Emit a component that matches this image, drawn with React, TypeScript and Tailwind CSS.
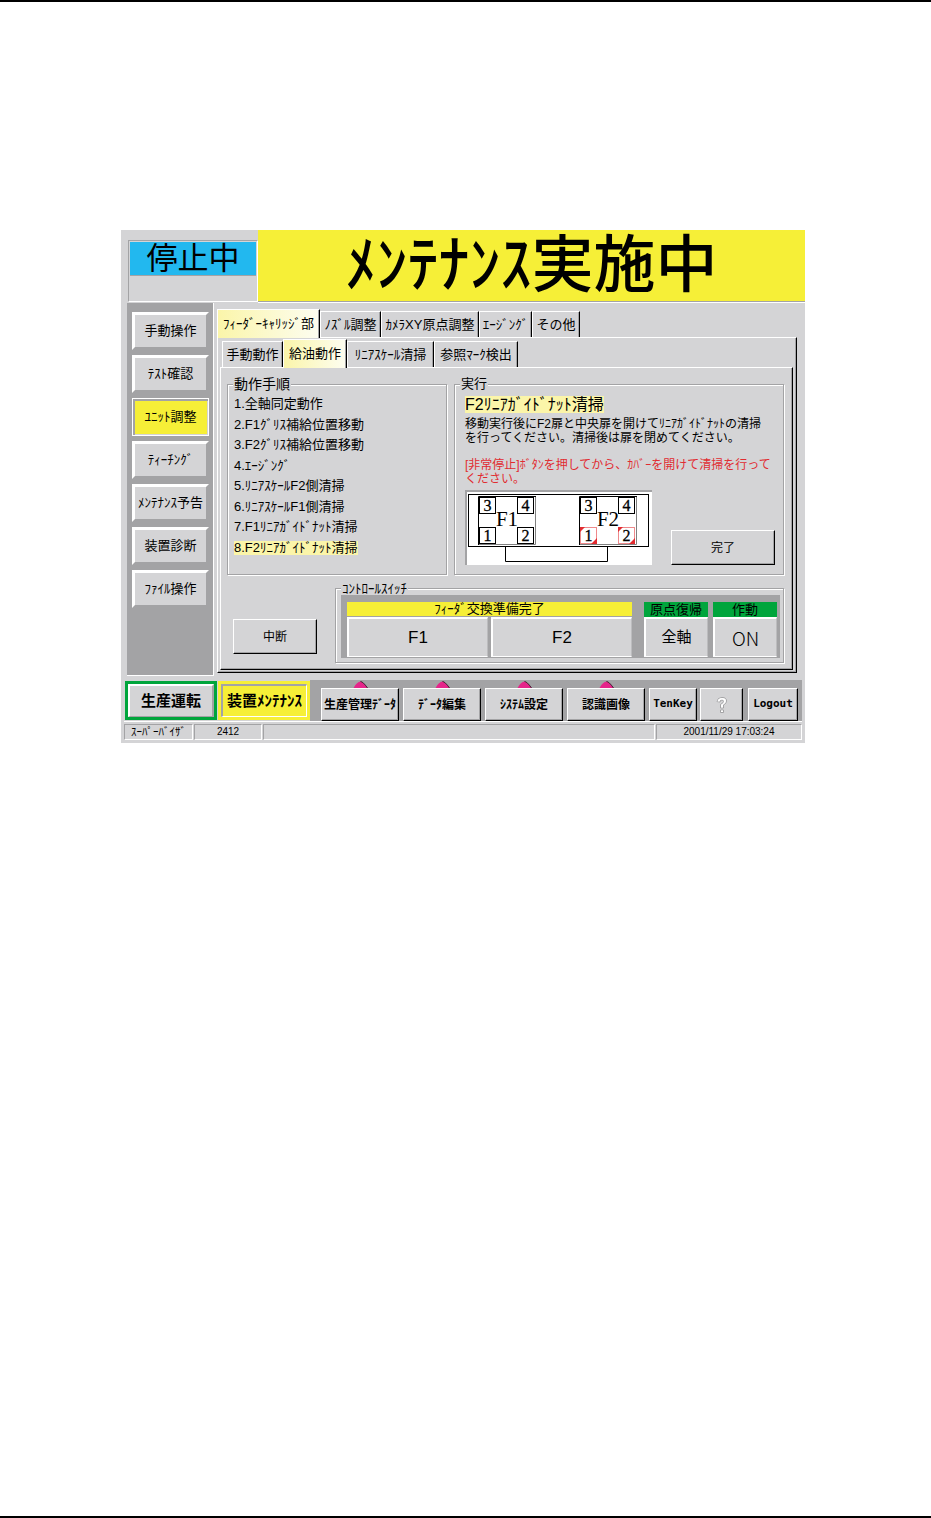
import type { ReactNode } from "react";

const sideItems = ["手動操作", "ﾃｽﾄ確認", "ﾕﾆｯﾄ調整", "ﾃｨｰﾁﾝｸﾞ", "ﾒﾝﾃﾅﾝｽ予告", "装置診断", "ﾌｧｲﾙ操作"];

const mainTabs = [
  { label: "ﾌｨｰﾀﾞｰｷｬﾘｯｼﾞ部", width: "w-[103px]" },
  { label: "ﾉｽﾞﾙ調整", width: "w-[61px]" },
  { label: "ｶﾒﾗXY原点調整", width: "w-[98px]" },
  { label: "ｴｰｼﾞﾝｸﾞ", width: "w-[53px]" },
  { label: "その他", width: "w-[48px]" },
];

const subTabs = [
  { label: "手動動作", width: "w-[61px]" },
  { label: "給油動作", width: "w-[64px]" },
  { label: "ﾘﾆｱｽｹｰﾙ清掃", width: "w-[87px]" },
  { label: "参照ﾏｰｸ検出", width: "w-[84px]" },
];

const steps = [
  "1.全軸同定動作",
  "2.F1ｸﾞﾘｽ補給位置移動",
  "3.F2ｸﾞﾘｽ補給位置移動",
  "4.ｴｰｼﾞﾝｸﾞ",
  "5.ﾘﾆｱｽｹｰﾙF2側清掃",
  "6.ﾘﾆｱｽｹｰﾙF1側清掃",
  "7.F1ﾘﾆｱｶﾞｲﾄﾞﾅｯﾄ清掃",
  "8.F2ﾘﾆｱｶﾞｲﾄﾞﾅｯﾄ清掃",
];

const menuItems = ["生産管理ﾃﾞｰﾀ", "ﾃﾞｰﾀ編集", "ｼｽﾃﾑ設定", "認識画像"];

const raised =
  "border border-t-white border-l-white border-r-black border-b-black bg-[#d4d4d6] shadow-[inset_-1px_-1px_0_#a3a3a5]";

const groupBox =
  "min-w-0 border border-[#a3a3a5] shadow-[1px_1px_0_#fff,inset_1px_1px_0_#fff]";

function Tab({ label, width, selected }: { label: string; width: string; selected: boolean }) {
  return (
    <button
      type="button"
      role="tab"
      aria-selected={selected}
      className={`${width} shrink-0 whitespace-nowrap border-t border-r border-l border-t-white border-l-white border-r-black text-[13px] leading-[14px] shadow-[inset_-1px_0_0_#a3a3a5] ${
        selected
          ? "relative -mb-px h-[29px] bg-linear-to-r from-[#fbf5a9] to-[#fdfdf0]"
          : "h-[26px] bg-[#d4d4d6]"
      }`}
    >
      {label}
    </button>
  );
}

function SwitchButton({ children, className }: { children: ReactNode; className: string }) {
  return (
    <button
      type="button"
      className={`h-10 border-t-2 border-r border-b border-l-2 border-t-white border-r-[#bcbcbe] border-b-white border-l-white bg-[#d4d4d6] ${className}`}
    >
      {children}
    </button>
  );
}

function Carriage({ x, name, alert }: { x: number; name: string; alert: boolean }) {
  const lower = alert ? "#ee8a8c" : "#000";
  const cells = [
    { n: "3", cx: 1, cy: 5, c: "#000" },
    { n: "4", cx: 39, cy: 5, c: "#000" },
    { n: "1", cx: 1, cy: 35, c: lower },
    { n: "2", cx: 39, cy: 35, c: lower },
  ];
  return (
    <g transform={`translate(${x} 0)`}>
      <path d="M57.5 4.5V52.5H0.5" fill="none" stroke="#808080" />
      <path d="M0.5 53V4.5H58" fill="none" stroke="#000" />
      {cells.map((c) => (
        <g key={c.n}>
          <rect x={c.cx + 0.5} y={c.cy + 0.5} width="16" height="16" fill="#fff" stroke={c.c} />
          {alert && c.cy > 30 && (
            <path
              d={`M${c.cx} ${c.cy}h5l-5 5zM${c.cx + 17} ${c.cy + 17}h-6l6 -6z`}
              fill="#e12b30"
            />
          )}
          <text x={c.cx + 8.5} y={c.cy + 14} textAnchor="middle" fontSize="16" stroke="#000" strokeWidth="0.3">
            {c.n}
          </text>
        </g>
      ))}
      <text x="29" y="34" textAnchor="middle" fontSize="21">
        {name}
      </text>
    </g>
  );
}

function CarriageDiagram() {
  return (
    <div className="w-[187px] border-t-2 border-l-2 border-[#a3a3a5] bg-white">
      <svg
        viewBox="0 0 185 73"
        className="block h-[73px] w-full font-['Liberation_Serif',serif]"
        role="img"
        aria-label="F1 F2"
      >
        <rect x="1.5" y="2.5" width="180" height="52" fill="#fff" stroke="#000" />
        <path d="M38.5 55V69.5H140.5V55" fill="none" stroke="#000" />
        <Carriage x={11} name="F1" alert={false} />
        <Carriage x={112} name="F2" alert />
      </svg>
    </div>
  );
}

function Header() {
  return (
    <header className="flex h-[73px]">
      <div className="w-[137px] shrink-0 pt-[10px] pl-[7px]">
        <div className="h-[62px] border border-[#a3a3a5] border-r-white border-b-white p-px">
          <div className="flex h-[34px] items-center justify-center border-b border-[#a3a3a5] bg-[#22b8ef] text-[31px] leading-8">
            停止中
          </div>
        </div>
      </div>
      <div className="flex min-w-0 flex-1 flex-col">
        <h1 className="flex h-[71px] items-center justify-center bg-[#f6ef37] text-[62px] leading-none font-medium whitespace-nowrap">
          ﾒﾝﾃﾅﾝｽ実施中
        </h1>
        <div className="h-[2px] border-t border-b border-t-[#a3a3a5] border-b-white" />
      </div>
    </header>
  );
}

function Sidebar() {
  return (
    <nav className="flex w-[87px] shrink-0 flex-col gap-[5px] border-r border-b border-white bg-[#a3a3a5] pt-[9px] pr-1 pl-[5px]">
      {sideItems.map((label) => (
        <button
          key={label}
          type="button"
          className={`h-[38px] text-[13px] leading-4 whitespace-nowrap ${
            label === "ﾕﾆｯﾄ調整"
              ? "border border-white bg-[#f6ef37] shadow-[inset_2px_2px_0_#a3a3a5,inset_-1px_-1px_0_#d4d4d6]"
              : "border-[3px] border-t-white border-r-[#a3a3a5] border-b-[#a3a3a5] border-l-white bg-[#d4d4d6]"
          }`}
        >
          {label}
        </button>
      ))}
    </nav>
  );
}

function ProcedureBox() {
  return (
    <fieldset className={`${groupBox} flex w-[220px] shrink-0 flex-col pr-1 pl-[5px]`}>
      <legend className="bg-[#d4d4d6] px-px text-sm leading-[14px]">動作手順</legend>
      <ol className="flex h-[164px] flex-col justify-between pt-[6px] pl-px text-[13px] leading-[14px]">
        {steps.map((step, i) => (
          <li key={step} className={i === 7 ? "w-fit bg-[#fbf5a9] whitespace-nowrap" : "w-fit whitespace-nowrap"}>
            {step}
          </li>
        ))}
      </ol>
    </fieldset>
  );
}

function ExecuteBox() {
  return (
    <fieldset className={`${groupBox} flex-1 pr-2 pl-[5px]`}>
      <legend className="bg-[#d4d4d6] px-px text-[13px] leading-[14px]">実行</legend>
      <div className="pt-[5px] pl-[5px]">
        <h2 className="w-fit bg-[#fbf5a9] text-base leading-[17px] whitespace-nowrap">
          F2ﾘﾆｱｶﾞｲﾄﾞﾅｯﾄ清掃
        </h2>
        <p className="mt-1 text-xs leading-[14px] whitespace-nowrap">
          移動実行後にF2扉と中央扉を開けてﾘﾆｱｶﾞｲﾄﾞﾅｯﾄの清掃
          <br />
          を行ってください。清掃後は扉を閉めてください。
        </p>
        <p className="mt-[13px] text-xs leading-[14px] whitespace-nowrap text-[#e12b30]">
          [非常停止]ﾎﾞﾀﾝを押してから、ｶﾊﾞｰを開けて清掃を行って
          <br />
          ください。
        </p>
        <div className="mt-1 flex items-end justify-between">
          <CarriageDiagram />
          <button type="button" className={`${raised} h-[35px] w-[104px] text-xs`}>
            完了
          </button>
        </div>
      </div>
    </fieldset>
  );
}

function ControlSwitches() {
  return (
    <fieldset className={`${groupBox} flex-1 pr-[3px] pb-1 pl-[5px]`}>
      <legend className="bg-[#d4d4d6] px-px text-[13px] leading-[13px]">ｺﾝﾄﾛｰﾙｽｲｯﾁ</legend>
      <div className="flex bg-[#a3a3a5] pt-[7px] pr-[3px] pb-px pl-[6px]">
        <div className="flex-1">
          <div className="h-[14px] bg-[#f6ef37] text-center text-[13px] leading-[14px]">ﾌｨｰﾀﾞ交換準備完了</div>
          <div className="mt-px flex gap-[3px]">
            <SwitchButton className="flex-1 text-[17px]">F1</SwitchButton>
            <SwitchButton className="flex-1 text-[17px]">F2</SwitchButton>
          </div>
        </div>
        <div className="ml-3 w-16">
          <div className="h-[15px] bg-[#00a53c] text-center text-[13px] leading-[15px]">原点復帰</div>
          <SwitchButton className="w-full text-[15px]">全軸</SwitchButton>
        </div>
        <div className="ml-[5px] w-16">
          <div className="h-[15px] bg-[#00a53c] text-center text-[13px] leading-[15px]">作動</div>
          <SwitchButton className="w-full font-['Noto_Sans_CJK_JP',sans-serif] text-[19px] leading-5 font-light">
            ON
          </SwitchButton>
        </div>
      </div>
    </fieldset>
  );
}

function Workspace() {
  return (
    <main className="min-w-0 flex-1 pt-[6px] pr-2 pb-[3px] pl-[3px]">
      <div role="tablist" className="flex h-7 items-end">
        {mainTabs.map((t, i) => (
          <Tab key={t.label} label={t.label} width={t.width} selected={i === 0} />
        ))}
      </div>
      <div className="border border-t-white border-r-black border-b-black border-l-white pt-px pr-[3px] pb-[2px] pl-[2px] shadow-[inset_-1px_-1px_0_#a3a3a5]">
        <div role="tablist" className="flex h-7 items-end pl-[2px]">
          {subTabs.map((t, i) => (
            <Tab key={t.label} label={t.label} width={t.width} selected={i === 1} />
          ))}
        </div>
        <div className="border border-t-white border-r-black border-b-black border-l-white pt-[9px] pr-2 pb-[6px] pl-[6px] shadow-[inset_-1px_-1px_0_#a3a3a5]">
          <div className="flex h-[198px] gap-[7px]">
            <ProcedureBox />
            <ExecuteBox />
          </div>
          <div className="mt-[7px] flex items-end">
            <button type="button" className={`${raised} mr-[18px] mb-[9px] ml-[6px] h-[35px] w-[84px] text-xs`}>
              中断
            </button>
            <ControlSwitches />
          </div>
        </div>
      </div>
    </main>
  );
}

function MenuBar() {
  return (
    <nav className="mx-[3px] flex h-[42px] items-end border-b border-white bg-[#a3a3a5] pr-1">
      <div className="flex h-full shrink-0 gap-px bg-[#d4d4d6] pl-px">
        <button type="button" className="my-px w-[92px] border-[3px] border-[#00a53c] bg-[#d4d4d6] p-0 text-[15px] leading-5 font-bold">
          <span className="flex h-full items-center justify-center border-t-2 border-r-2 border-b border-l-2 border-t-white border-r-[#a3a3a5] border-b-[#a3a3a5] border-l-white">
            生産運転
          </span>
        </button>
        <button type="button" className="my-px w-[92px] border-[3px] border-[#f6ef37] bg-[#f6ef37] p-0 text-[15px] leading-5 font-bold whitespace-nowrap">
          <span className="flex h-full items-center justify-center border-t-2 border-r border-b border-l-2 border-t-[#a3a3a5] border-r-white border-b-white border-l-[#a3a3a5]">
            装置ﾒﾝﾃﾅﾝｽ
          </span>
        </button>
      </div>
      <div className="ml-[11px] flex flex-1 gap-1">
        {menuItems.map((label) => (
          <div key={label} className="flex min-w-0 flex-1 flex-col items-center">
            <svg viewBox="0 0 15 7" className="h-[7px] w-[15px]" aria-hidden="true">
              <path d="M0.5 7Q4 0.5 7.5 0.5Q10 0.5 14.5 7Z" fill="#e5258a" />
              <path d="M7.5 0.5Q10 0.5 14.5 7" fill="none" stroke="#402030" />
            </svg>
            <button type="button" className={`${raised} h-[33px] w-full text-xs font-bold whitespace-nowrap`}>
              {label}
            </button>
          </div>
        ))}
      </div>
      <button type="button" className={`${raised} ml-1 h-[33px] w-12 font-['DejaVu_Sans_Mono',monospace] text-[11px] font-bold`}>
        TenKey
      </button>
      <button
        type="button"
        aria-label="?"
        className={`${raised} ml-[3px] flex h-[33px] w-[43px] items-center justify-center`}
      >
        <svg viewBox="0 0 14 18" className="h-[18px] w-[14px]" fill="none" aria-hidden="true">
          <path
            d="M2 5.5Q2.5 1.5 7 1.5Q11.5 1.5 11.5 5Q11.5 7.5 8.5 9V12H5.5V8.5Q8.5 7 8.5 5.5Q8.5 4 7 4Q5 4 5 6ZM5.5 14h3v2.5h-3Z"
            stroke="#a3a3a5"
            strokeWidth="1"
          />
          <path
            d="M2.5 5.5Q3 2 7 2Q11 2 11 5Q11 7.3 8 8.7V11.5H6V8.8Q9 7.3 9 5.5Q9 3.5 7 3.5Q4.6 3.5 4.5 5.5ZM6 14.5h2v1.5h-2Z"
            fill="#fff"
          />
        </svg>
      </button>
      <button type="button" className={`${raised} ml-[5px] h-[33px] w-[50px] font-['DejaVu_Sans_Mono',monospace] text-[11px] font-bold`}>
        Logout
      </button>
    </nav>
  );
}

function StatusCell({ children, className }: { children?: ReactNode; className: string }) {
  return (
    <div
      className={`flex h-4 items-center justify-center border border-t-[#a3a3a5] border-r-white border-b-white border-l-[#a3a3a5] leading-[14px] whitespace-nowrap ${className}`}
    >
      {children}
    </div>
  );
}

export default function App() {
  return (
    <div className="min-h-screen border-y-2 border-black bg-white pt-[228px] pr-[126px] pl-[121px] font-['Liberation_Sans','Noto_Sans_CJK_JP',sans-serif] text-black">
      <div className="bg-[#d4d4d6]">
        <Header />
        <div className="flex pl-[6px]">
          <Sidebar />
          <Workspace />
        </div>
        <div className="h-[4px]" />
        <MenuBar />
        <footer className="flex gap-px px-[3px] pt-[2px] pb-[3px]">
          <StatusCell className="w-[69px] text-[11px]">ｽｰﾊﾟｰﾊﾞｲｻﾞ</StatusCell>
          <StatusCell className="w-[68px] text-[10px]">2412</StatusCell>
          <StatusCell className="flex-1" />
          <StatusCell className="w-[146px] text-[10px]">2001/11/29 17:03:24</StatusCell>
        </footer>
      </div>
    </div>
  );
}
